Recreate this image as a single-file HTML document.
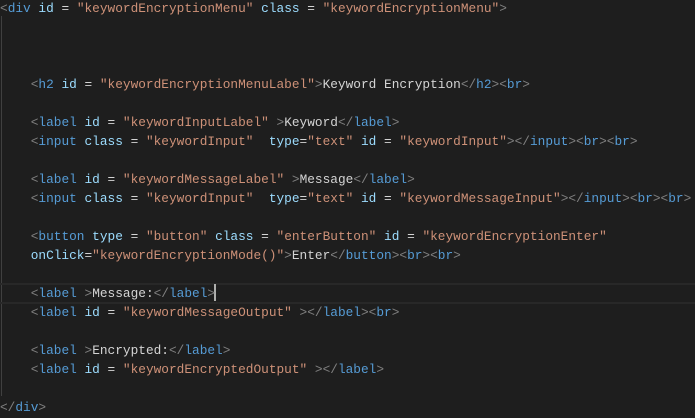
<!DOCTYPE html>
<html><head><style>
html,body{margin:0;padding:0;background:#1e1e1e;width:695px;height:418px;overflow:hidden}
pre{margin:0;position:absolute;left:0;top:-1px;font-family:"Liberation Mono",monospace;font-size:12.8px;line-height:19px;color:#d4d4d4;white-space:pre}
.b{color:#808080}.t{color:#569cd6}.a{color:#9cdcfe}.s{color:#ce9178}
.guide{position:absolute;left:1px;top:16px;width:1px;height:380px;background:#404040}
.cur{position:absolute;left:0;top:283px;width:695px;height:17px;border-top:2px solid #282828;border-bottom:2px solid #282828}
.caret{position:absolute;left:214px;top:284px;width:2px;height:17px;background:#aeafad}
</style></head><body>
<div class="guide"></div><div class="cur"></div><div class="caret"></div>
<pre><span class="b">&lt;</span><span class="t">div</span> <span class="a">id</span> = <span class="s">"keywordEncryptionMenu"</span> <span class="a">class</span> = <span class="s">"keywordEncryptionMenu"</span><span class="b">&gt;</span>



    <span class="b">&lt;</span><span class="t">h2</span> <span class="a">id</span> = <span class="s">"keywordEncryptionMenuLabel"</span><span class="b">&gt;</span>Keyword Encryption<span class="b">&lt;/</span><span class="t">h2</span><span class="b">&gt;&lt;</span><span class="t">br</span><span class="b">&gt;</span>

    <span class="b">&lt;</span><span class="t">label</span> <span class="a">id</span> = <span class="s">"keywordInputLabel"</span> <span class="b">&gt;</span>Keyword<span class="b">&lt;/</span><span class="t">label</span><span class="b">&gt;</span>
    <span class="b">&lt;</span><span class="t">input</span> <span class="a">class</span> = <span class="s">"keywordInput"</span>  <span class="a">type</span>=<span class="s">"text"</span> <span class="a">id</span> = <span class="s">"keywordInput"</span><span class="b">&gt;&lt;/</span><span class="t">input</span><span class="b">&gt;&lt;</span><span class="t">br</span><span class="b">&gt;&lt;</span><span class="t">br</span><span class="b">&gt;</span>

    <span class="b">&lt;</span><span class="t">label</span> <span class="a">id</span> = <span class="s">"keywordMessageLabel"</span> <span class="b">&gt;</span>Message<span class="b">&lt;/</span><span class="t">label</span><span class="b">&gt;</span>
    <span class="b">&lt;</span><span class="t">input</span> <span class="a">class</span> = <span class="s">"keywordInput"</span>  <span class="a">type</span>=<span class="s">"text"</span> <span class="a">id</span> = <span class="s">"keywordMessageInput"</span><span class="b">&gt;&lt;/</span><span class="t">input</span><span class="b">&gt;&lt;</span><span class="t">br</span><span class="b">&gt;&lt;</span><span class="t">br</span><span class="b">&gt;</span>

    <span class="b">&lt;</span><span class="t">button</span> <span class="a">type</span> = <span class="s">"button"</span> <span class="a">class</span> = <span class="s">"enterButton"</span> <span class="a">id</span> = <span class="s">"keywordEncryptionEnter"</span>
    <span class="a">onClick</span>=<span class="s">"keywordEncryptionMode()"</span><span class="b">&gt;</span>Enter<span class="b">&lt;/</span><span class="t">button</span><span class="b">&gt;&lt;</span><span class="t">br</span><span class="b">&gt;&lt;</span><span class="t">br</span><span class="b">&gt;</span>

    <span class="b">&lt;</span><span class="t">label</span> <span class="b">&gt;</span>Message:<span class="b">&lt;/</span><span class="t">label</span><span class="b">&gt;</span>
    <span class="b">&lt;</span><span class="t">label</span> <span class="a">id</span> = <span class="s">"keywordMessageOutput"</span> <span class="b">&gt;&lt;/</span><span class="t">label</span><span class="b">&gt;&lt;</span><span class="t">br</span><span class="b">&gt;</span>

    <span class="b">&lt;</span><span class="t">label</span> <span class="b">&gt;</span>Encrypted:<span class="b">&lt;/</span><span class="t">label</span><span class="b">&gt;</span>
    <span class="b">&lt;</span><span class="t">label</span> <span class="a">id</span> = <span class="s">"keywordEncryptedOutput"</span> <span class="b">&gt;&lt;/</span><span class="t">label</span><span class="b">&gt;</span>

<span class="b">&lt;/</span><span class="t">div</span><span class="b">&gt;</span></pre>
</body></html>
